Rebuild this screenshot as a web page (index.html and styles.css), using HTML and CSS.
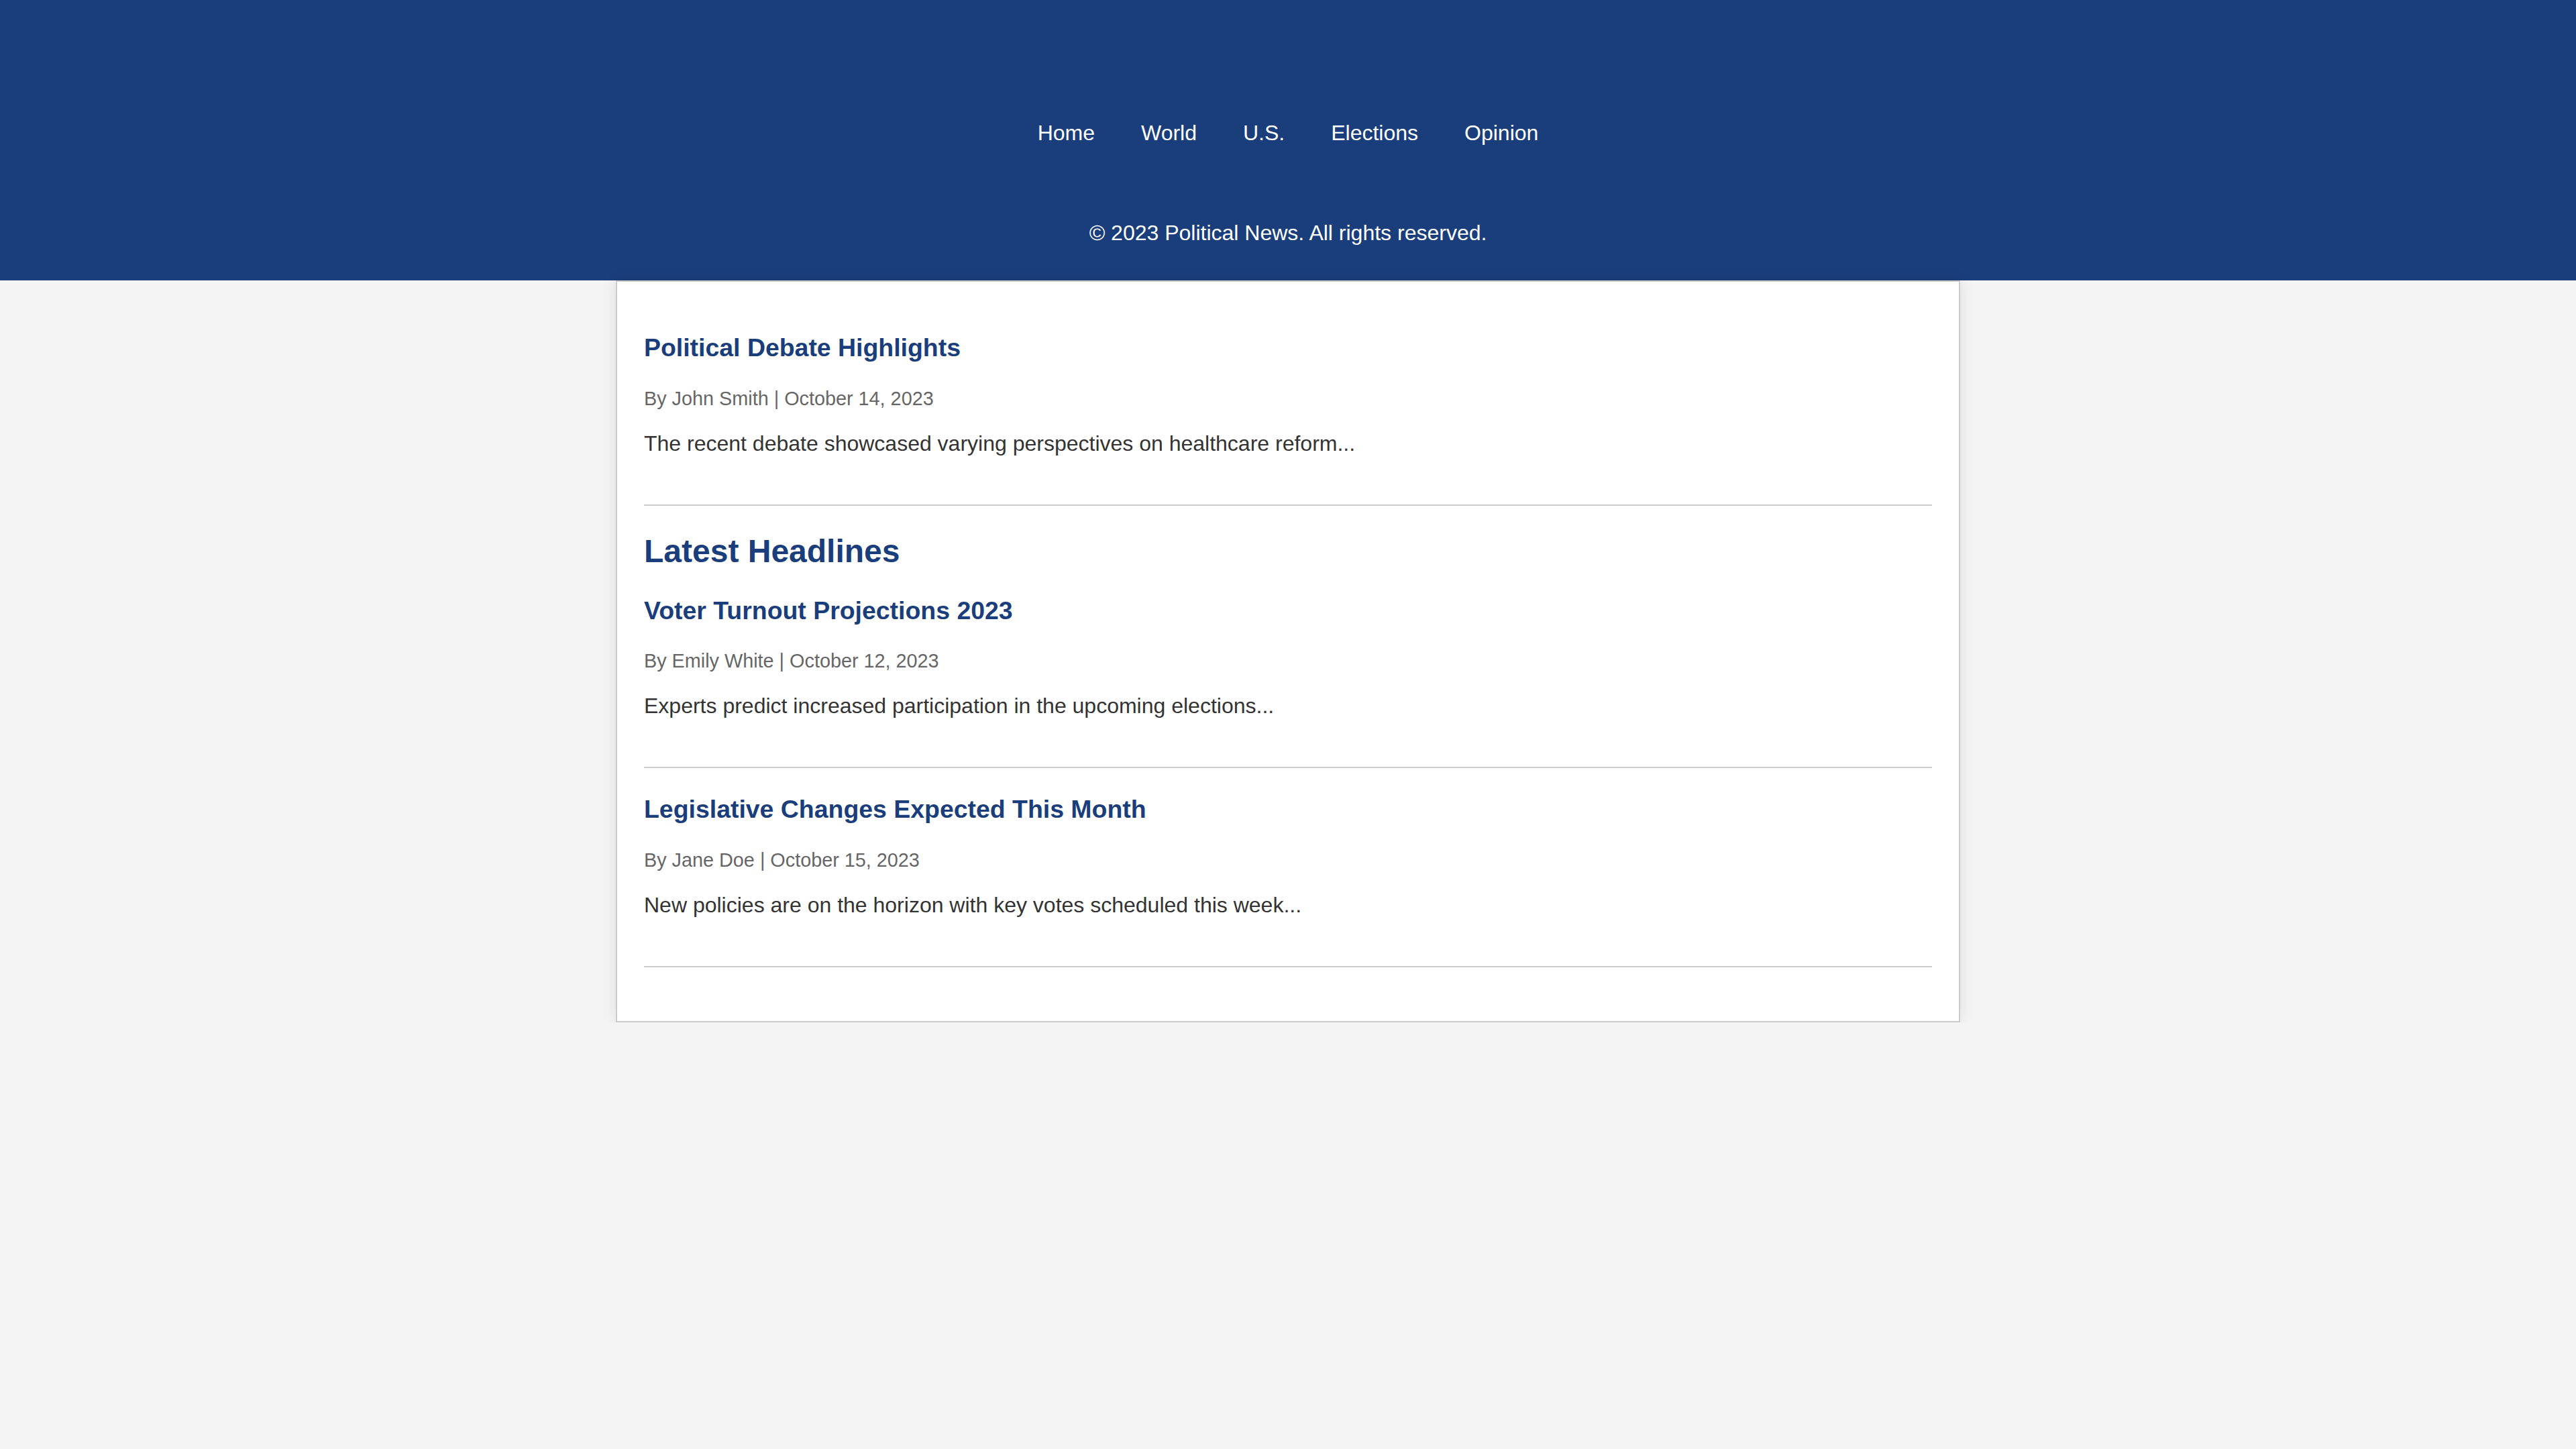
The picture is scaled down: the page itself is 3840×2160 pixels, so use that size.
FILE: index.html
```html
<!DOCTYPE html>
<html lang="en">
<head>
<meta charset="utf-8">
<title>Political News</title>
<link rel="stylesheet" href="styles.css">
</head>
<body>
<header class="site-header">
  <nav>
    <ul class="nav">
      <li><a href="#">Home</a></li>
      <li><a href="#">World</a></li>
      <li><a href="#">U.S.</a></li>
      <li><a href="#">Elections</a></li>
      <li><a href="#">Opinion</a></li>
    </ul>
  </nav>
  <p class="copyright">&copy; 2023 Political News. All rights reserved.</p>
</header>
<main class="content">
  <article class="article">
    <h3 class="article-title">Political Debate Highlights</h3>
    <p class="meta">By John Smith | October 14, 2023</p>
    <p class="summary">The recent debate showcased varying perspectives on healthcare reform...</p>
  </article>
  <section class="headlines">
    <h2 class="section-title">Latest Headlines</h2>
    <article class="article">
      <h3 class="article-title">Voter Turnout Projections 2023</h3>
      <p class="meta">By Emily White | October 12, 2023</p>
      <p class="summary">Experts predict increased participation in the upcoming elections...</p>
    </article>
    <article class="article">
      <h3 class="article-title">Legislative Changes Expected This Month</h3>
      <p class="meta">By Jane Doe | October 15, 2023</p>
      <p class="summary">New policies are on the horizon with key votes scheduled this week...</p>
    </article>
  </section>
</main>
</body>
</html>
```
FILE: styles.css
```css
body {
  margin: 0;
  background: #f4f4f4;
  font-family: "Liberation Sans", Arial, Helvetica, sans-serif;
  font-size: 32px;
  color: #333;
}

.site-header {
  background: #1a3e7c;
  color: #fff;
  text-align: center;
  padding: 180px 0 52px;
}

.nav {
  display: flex;
  justify-content: center;
  gap: 69px;
  list-style: none;
  margin: 0;
  padding: 0;
}

.nav a {
  color: #fff;
  text-decoration: none;
}

.copyright {
  margin: 112px 0 0;
}

.content {
  width: 1920px;
  margin: 0 auto;
  padding: 40px;
  background: #fff;
  border: 2px solid #ccc;
  box-shadow: 0 0 20px rgba(0, 0, 0, 0.1);
}

.article {
  padding-bottom: 40px;
  border-bottom: 2px solid #ccc;
  margin-bottom: 40px;
}

.article-title {
  font-size: 1.17em;
  color: #1a3e7c;
  margin: 1em 0;
}

.section-title {
  font-size: 1.5em;
  color: #1a3e7c;
  margin: 0.83em 0;
}

.meta {
  font-size: 0.9em;
  color: #666;
  margin: 1em 0;
}

.summary {
  margin: 1em 0;
  color: #333;
}
```
